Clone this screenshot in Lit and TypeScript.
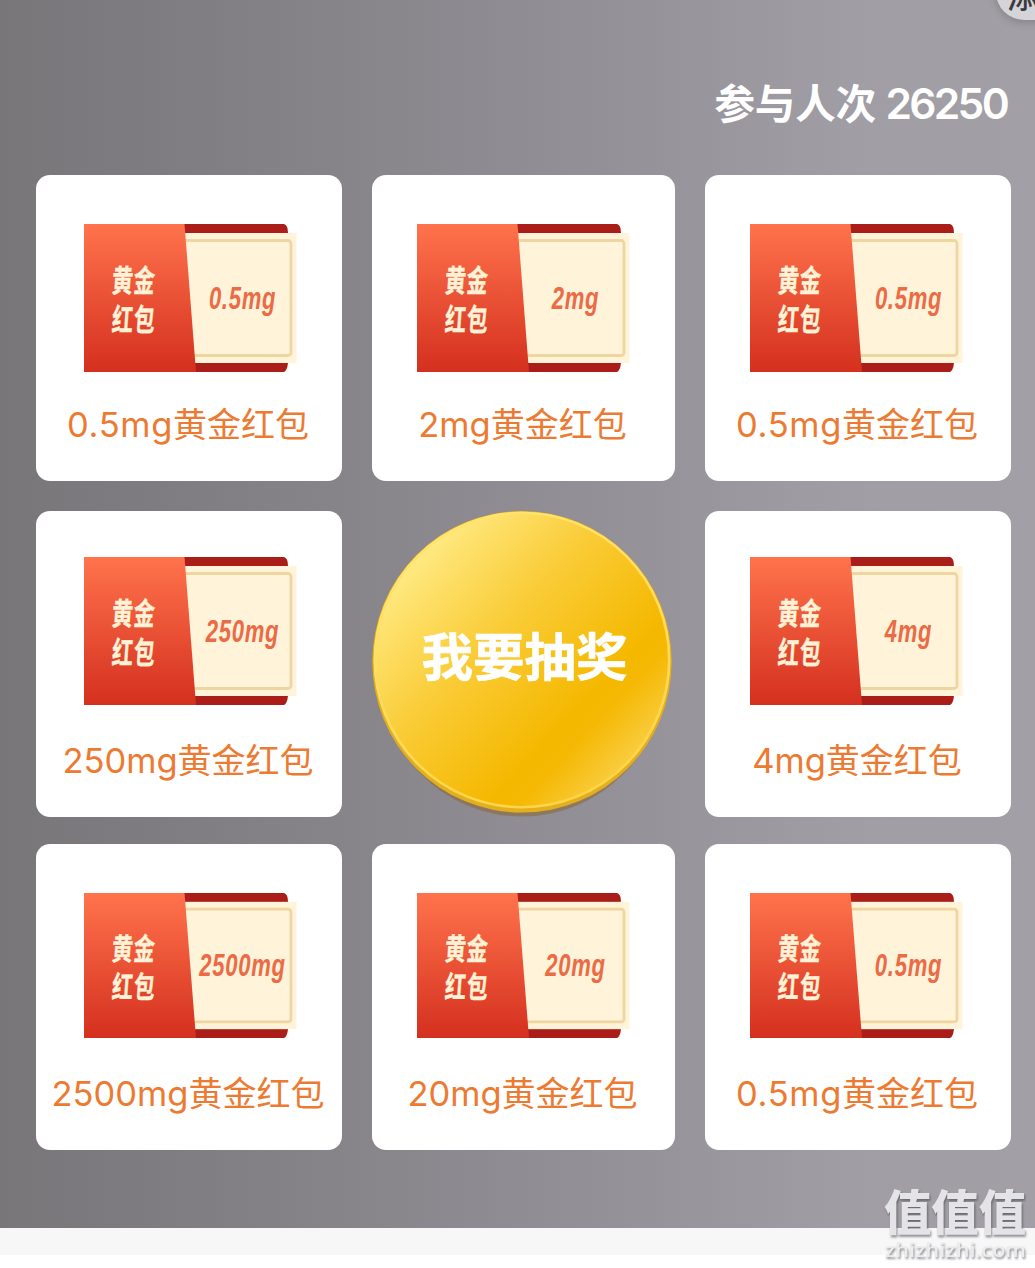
import { LitElement, html, css, svg } from "lit";
import { customElement, property } from "lit/decorators.js";

const CJK = css`"Noto Sans CJK SC", sans-serif`;

@customElement("gold-voucher")
class GoldVoucher extends LitElement {
  @property() amount = "";

  static styles = css`
    :host { display: block; width: 213px; height: 100%; }
    svg { display: block; width: 100%; height: 100%; }
    .name { font: 700 31px ${CJK}; fill: #fff2d6; stroke: #fff2d6; stroke-width: .4px; }
    .amount { font: italic 700 32px "Liberation Sans", Arial, sans-serif; fill: #ea6b45; letter-spacing: 1px; }
  `;

  render() {
    return html`<svg viewBox="0 0 213 148" preserveAspectRatio="none">
      <defs>
        <linearGradient id="flap" x1="0" y1="0" x2="0" y2="1">
          <stop offset="0" stop-color="#ff734c"></stop>
          <stop offset="1" stop-color="#d4301f"></stop>
        </linearGradient>
      </defs>
      ${svg`
        <path d="M90 0H200Q204 1 204 9V139Q203 147 200 148H90Z" fill="#ab1d18"/>
        <rect x="98" y="9" width="114.5" height="130" fill="#fff3da"/>
        <rect x="80" y="16.5" width="127" height="115" rx="3" fill="#fff3da" stroke="#efd6a0" stroke-width="2.8"/>
        <path d="M0 0H100.5L112 148H0Z" fill="url(#flap)"/>
        <g transform="translate(27.3 68.4) skewX(-4) scale(.68 1)"><text class="name" x="0 32" y="0">黄金</text></g>
        <g transform="translate(27.3 107) skewX(-4) scale(.68 1)"><text class="name" x="0 32" y="0">红包</text></g>
        <g transform="translate(158.5 84.5) scale(.69 1)"><text class="amount" text-anchor="middle">${this.amount}</text></g>
      `}
    </svg>`;
  }
}

@customElement("prize-card")
class PrizeCard extends LitElement {
  @property() amount = "";

  static styles = css`
    :host { display: block; box-sizing: border-box; background: #fff; border-radius: 14px; }
    .body { display: flex; flex-direction: column; height: 100%; box-sizing: border-box;
      padding: var(--card-top, 49px) 2px 8px 0; }
    .art { height: var(--art-height, 148px); padding-left: var(--art-left, 45px); }
    .label { margin-top: auto; height: 100px; line-height: 100px; text-align: center; white-space: nowrap;
      font-family: ${CJK}; font-size: 34px; color: #ed7a31; }
    .latin { font-family: Inter, sans-serif; font-size: 34.5px; }
    .dotted { letter-spacing: .7px; }
  `;

  render() {
    const latin = this.amount.includes(".") ? "latin dotted" : "latin";
    return html`<div class="body">
      <div class="art"><gold-voucher .amount=${this.amount}></gold-voucher></div>
      <div class="label"><span class=${latin}>${this.amount}</span>黄金红包</div>
    </div>`;
  }
}

@customElement("app-root")
class AppRoot extends LitElement {
  static styles = css`
    :host { display: block; position: relative; width: 1035px; height: 1268px; overflow: hidden; background: #fff; }
    .stage { height: 1228px; box-sizing: border-box; padding: 70px 24px 0 36px;
      background: linear-gradient(90deg, #79767a 0%, #87848a 34%, #95929a 62%, #a09da4 82%, #a29fa6 100%); }
    .count { height: 64px; padding-right: 3px; text-align: right; color: #fff;
      font: 700 40.5px/64px ${CJK}; white-space: pre; }
    .number { font-family: Inter, sans-serif; font-weight: 600; font-size: 42.5px; letter-spacing: -2.7px; margin-right: 1px; }
    .grid { margin-top: 41px; display: grid; grid-template-columns: 306px 303px 306px;
      grid-template-rows: 306px 306px 306px; column-gap: 30px; row-gap: 30px; }
    .left { --art-left: 48px; }
    .row1 { --card-top: 46px; }
    .row2 { --art-height: 145px; margin-top: -3px; margin-bottom: 3px; }
    .draw { display: block; border: 0; padding: 0; margin: 0; background: none; width: 303px; height: 306px; }
    .draw svg { display: block; }
    .draw text { font: 700 51.5px ${CJK}; fill: #fff; stroke: #fff; stroke-width: .6px; }
    .foot { height: 27px; background: #f7f7f7; }
    .pill { position: absolute; left: 996px; top: -36px; width: 110px; height: 56px; border-radius: 28px;
      background: #d5d4d8; box-shadow: 0 2px 8px rgba(60, 55, 65, .3); color: #3d3b42;
      font: 500 32px/56px ${CJK}; box-sizing: border-box; padding-left: 11px; white-space: nowrap; }
    .pill span { display: block; transform: translateY(2px); }
    .mark { position: absolute; left: 875px; top: 1176px; width: 160px; height: 92px; }
    .mark svg { display: block; filter: drop-shadow(1px 2px 1px rgba(70, 68, 75, .6)); }
    .brand { font: 900 48px ${CJK}; fill: #e4e3e7; }
    .site { font: 600 20.5px "Open Sans", sans-serif; fill: #ecebee; }
  `;

  private amounts = ["0.5mg", "2mg", "0.5mg", "250mg", "", "4mg", "2500mg", "20mg", "0.5mg"];

  private drawButton() {
    return html`<button class="draw">
      <svg width="303" height="306" viewBox="0 0 303 306">
        <defs>
          <linearGradient id="gold" x1=".1" y1=".14" x2=".9" y2=".9">
            <stop offset="0" stop-color="#ffec8a"></stop>
            <stop offset=".17" stop-color="#fddd62"></stop>
            <stop offset=".38" stop-color="#f9cb35"></stop>
            <stop offset=".72" stop-color="#f5b800"></stop>
            <stop offset=".79" stop-color="#f5b905"></stop>
            <stop offset="1" stop-color="#fbd456"></stop>
          </linearGradient>
          <linearGradient id="rim" x1=".2" y1="0" x2=".6" y2="1">
            <stop offset="0" stop-color="#ffe46f"></stop>
            <stop offset="1" stop-color="#ffd448"></stop>
          </linearGradient>
        </defs>
        <ellipse cx="150" cy="156.5" rx="145" ry="149" fill="#8a6f4c" opacity=".7"></ellipse>
        <ellipse cx="150" cy="150.8" rx="149.7" ry="150.8" fill="#e3af1c"></ellipse>
        <ellipse cx="150" cy="149" rx="147.2" ry="147.2" fill="url(#gold)" stroke="url(#rim)" stroke-width="2.6"></ellipse>
        <text x="152.5" y="165" text-anchor="middle">我要抽奖</text>
      </svg>
    </button>`;
  }

  render() {
    return html`
      <div class="stage">
        <div class="count">参与人次 <span class="number">26250</span></div>
        <div class="grid">
          ${this.amounts.map((amount, i) =>
            amount
              ? html`<prize-card class=${`row${Math.floor(i / 3)}${i % 3 === 0 ? " left" : ""}`} .amount=${amount}></prize-card>`
              : this.drawButton()
          )}
        </div>
      </div>
      <div class="foot"></div>
      <div class="pill"><span>添加</span></div>
      <div class="mark">
        <svg width="160" height="92" viewBox="0 0 160 92">
          <text class="brand" x="9" y="53.5" textLength="142" lengthAdjust="spacingAndGlyphs">值值值</text>
          <text class="site" x="10" y="80.5" textLength="141" lengthAdjust="spacingAndGlyphs">zhizhizhi.com</text>
        </svg>
      </div>
    `;
  }
}
